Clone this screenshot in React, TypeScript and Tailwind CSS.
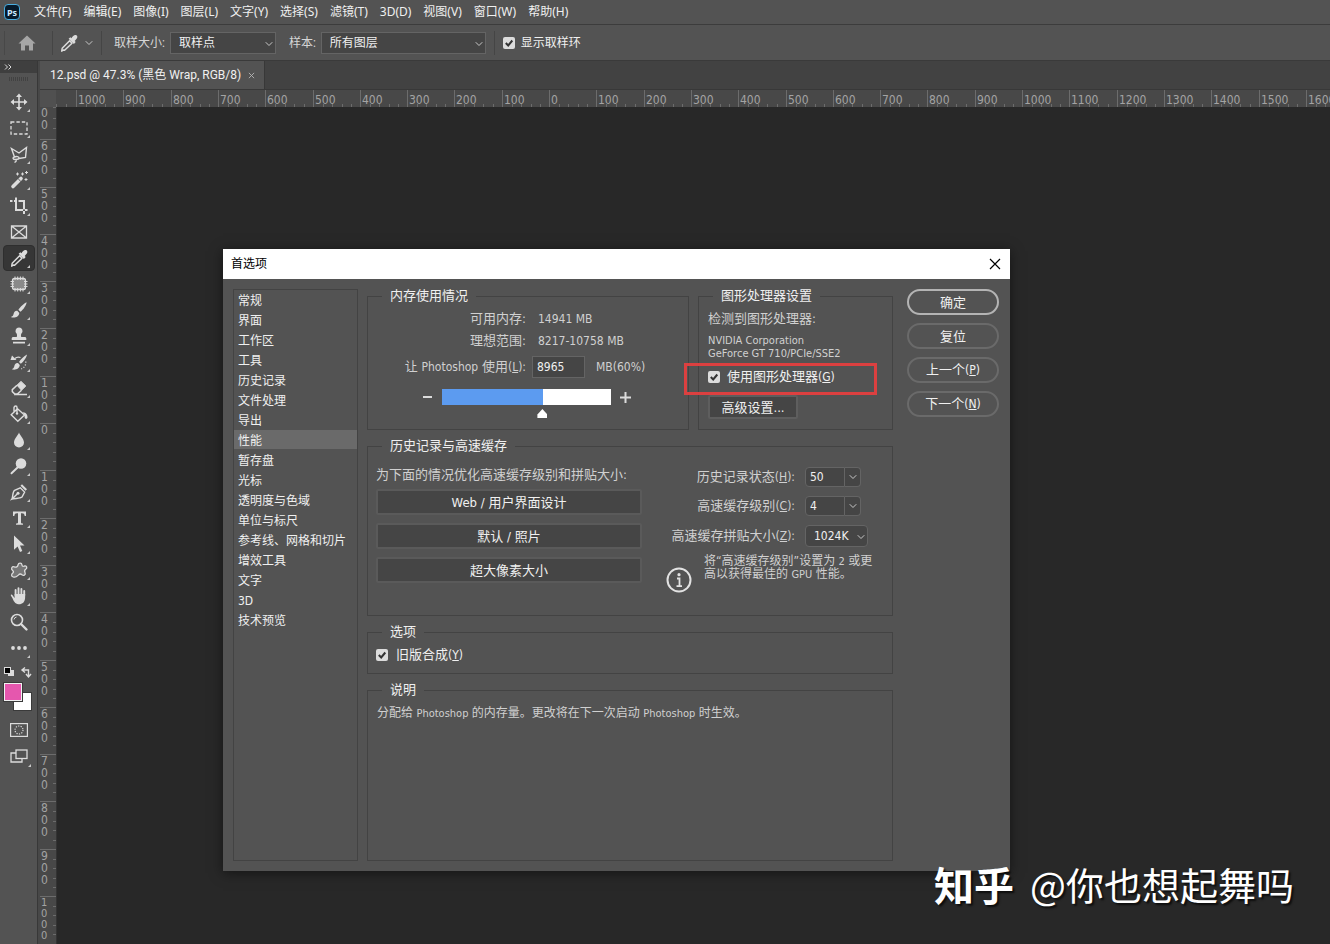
import React, { useState } from 'react';
import { ChevronDown } from 'lucide-react';

const UI_FONT = "font-[Roboto,'Noto_Sans_CJK_SC',sans-serif]";
const MENU_FONT = "font-['Noto_Sans','Noto_Sans_CJK_SC',sans-serif]";
const DIALOG_FONT = "font-['DejaVu_Sans_Condensed','Noto_Sans','Noto_Sans_CJK_SC',sans-serif]";

const menus = [
  '文件(F)', '编辑(E)', '图像(I)', '图层(L)', '文字(Y)', '选择(S)',
  '滤镜(T)', '3D(D)', '视图(V)', '窗口(W)', '帮助(H)',
];

const prefSections = [
  '常规', '界面', '工作区', '工具', '历史记录', '文件处理', '导出', '性能', '暂存盘',
  '光标', '透明度与色域', '单位与标尺', '参考线、网格和切片', '增效工具', '文字', '3D', '技术预览',
];

// Screen pixels for 100 document pixels at 47.3% zoom
const STEP = 47.3;
const cellSize = (i: number) => Math.round((i + 1) * STEP) - Math.round(i * STEP);

const EyedropperShape = () => (
  <>
    <path d="M4.5 17 2.7 18.2 3.2 15.3 10.6 7.8 13 10.2 5.6 17.3z" fill="none" strokeWidth="1.5" strokeLinejoin="round" />
    <path d="M9.6 5.8 11.4 4.2 12.4 5.2C13.6 3.4 15 1.8 16.8 2.1 18.7 2.6 18.7 4.6 17.6 5.8L15.7 7.9 16.7 9 14.9 10.9z" fill="currentColor" stroke="none" />
  </>
);

interface Tool {
  name: string;
  shape: React.ReactNode;
  single?: boolean;
}

const tools: Tool[] = [
  {
    name: '移动工具',
    shape: (
      <>
        <path d="M10 4v12M4 10h12" strokeWidth="1.6" />
        <path d="M10 1.5 13 5H7zM10 18.5 7 15h6zM1.5 10 5 7v6zM18.5 10 15 13V7z" fill="currentColor" stroke="none" />
      </>
    ),
  },
  { name: '矩形选框工具', shape: <rect x="2" y="4" width="16" height="12" fill="none" strokeWidth="1.3" strokeDasharray="3.4 2" /> },
  {
    name: '多边形套索工具',
    shape: (
      <path
        d="M5.5 13 2.5 4.5 10 9 17.5 3.5 16.5 13.5 10 14.5M5.5 13c-2 .5-2 2.5.5 2.5 2 0 4-.7 4-1.5 0-1.2-2.5-2-4.5-1zM7 15.3c.8 1.2.2 2.2-1.5 3.2"
        fill="none"
        strokeWidth="1.4"
      />
    ),
  },
  {
    name: '魔棒工具',
    shape: (
      <>
        <path d="M4 16.5 12 8.5" strokeWidth="3.6" strokeLinecap="round" />
        <path d="M13.5 5.5v-3M12 4h3M17.5 4v-3M16 2.5h3M17 11V8M15.5 9.5h3M8.5 5.5v-3M7 4h3" strokeWidth="1" />
        <path d="M9.2 8.8l2.6 2.6" stroke="#535353" strokeWidth="1" />
      </>
    ),
  },
  { name: '裁剪工具', shape: <path d="M1 5h2.5M5 5h1M7 1.5V14h7M9.5 5H15v8.5M15 15v3M16 14h2.5" fill="none" strokeWidth="2" /> },
  { name: '图框工具', single: true, shape: <path d="M2.5 4h15v12h-15zM2.5 4l15 12M17.5 4l-15 12" fill="none" strokeWidth="1.3" /> },
  { name: '吸管工具', shape: <EyedropperShape /> },
  {
    name: '修补工具',
    shape: (
      <>
        <rect x="3.5" y="4.5" width="13" height="11" rx="2" fill="#8a8a8a" strokeWidth="1.3" />
        <path d="M6 2.5V6M8.7 2.5V6M11.4 2.5V6M14 2.5V6M6 14v3.5M8.7 14v3.5M11.4 14v3.5M14 14v3.5M1.5 7.5H5M1.5 10H5M1.5 12.5H5M15 7.5h3.5M15 10h3.5M15 12.5h3.5" strokeWidth="1" />
      </>
    ),
  },
  {
    name: '画笔工具',
    shape: <path d="M17.6 2.2C15 3.5 11 7 9.4 9.8l2 2C14.3 9.7 17.4 5 17.6 2.2zM8.3 10.8C5.8 10.6 5 12.3 4.6 14 4.3 15.6 3.4 16.6 1.8 17 5.2 18.4 10 17 10.3 12.9z" fill="currentColor" stroke="none" />,
  },
  {
    name: '仿制图章工具',
    shape: <path d="M10 1.5a3.6 3.6 0 0 1 2.3 6.3C11.7 9 12 10.5 12.3 11h3.4c1 0 1.6.7 1.6 1.6V14H2.7v-1.4c0-.9.7-1.6 1.6-1.6h3.4c.3-.5.6-2 0-3.2A3.6 3.6 0 0 1 10 1.5zM4 15.7h12v1.8H4z" fill="currentColor" stroke="none" />,
  },
  {
    name: '历史记录画笔工具',
    shape: (
      <>
        <path d="M18 2.5C15 4 11.5 7.5 10 10l1.8 1.8C14.5 10 17.5 5.5 18 2.5zM9 11c-2.6-.1-3.3 1.5-3.7 3.2C5 15.7 4 16.8 2.7 17.2 6 18.5 10.5 17 10.8 13z" fill="currentColor" stroke="none" />
        <path d="M6 6.5C7.5 5 9.5 4.8 11.5 5.5" fill="none" strokeWidth="1.3" />
        <path d="M1.5 8 3 3.5 7.5 8z" fill="currentColor" stroke="none" />
        <path d="M16.8 9.5c.3 3-1.2 6-4.5 7.5" fill="none" strokeWidth="1.2" strokeDasharray="1.2 1.6" />
      </>
    ),
  },
  {
    name: '橡皮擦工具',
    shape: (
      <>
        <path d="M8 7.2 12 3.4 16.8 8 12.5 12.2z" fill="currentColor" strokeWidth="1" />
        <path d="M8 7.2 3.3 11.6v2L5.8 16h2.5l4.2-3.8M5 16.6h13" fill="none" strokeWidth="1.5" />
      </>
    ),
  },
  {
    name: '油漆桶工具',
    shape: (
      <>
        <path d="M8.5 4.8 15.5 11 8.8 17.3 2.2 10.8zM5 7.5V3.5C5.5 1.5 8 1.5 8 3.5v6" fill="none" strokeWidth="1.4" />
        <path d="M13.8 8.3c3-.2 5 2.8 4.7 5.3-.4 1.8-2.5 1.6-2.8 0-.2-2-.5-3.6-1.9-5.3z" fill="currentColor" stroke="none" />
        <circle cx="8" cy="9.6" r="1.2" fill="currentColor" stroke="none" />
      </>
    ),
  },
  { name: '模糊工具', shape: <path d="M10 2.5c1 3 5 6.4 5 10a5 5 0 0 1-10 0c0-3.6 4-7 5-10z" fill="currentColor" stroke="none" /> },
  {
    name: '减淡工具',
    shape: (
      <>
        <circle cx="12" cy="7.5" r="5.3" fill="currentColor" stroke="none" />
        <path d="M8.8 11.2 2.5 17.3" strokeWidth="1.9" strokeLinecap="round" />
      </>
    ),
  },
  {
    name: '钢笔工具',
    shape: (
      <>
        <path d="M2.8 17.2C4 15.5 3.3 10 5.6 8.3l5.7-2.5 4.3 4.3-2.6 5C11 17 5.5 16 2.8 17.2zM2.8 17.2 8.2 12" fill="none" strokeWidth="1.4" />
        <circle cx="9" cy="11.2" r="1.5" fill="currentColor" stroke="none" />
        <path d="M11.5 3.8 13 2.3 18 7.2 16.5 8.8z" fill="currentColor" stroke="none" />
      </>
    ),
  },
  {
    name: '横排文字工具',
    shape: <path d="M4 3.5h13V8h-1.3c-.3-2-1-2.7-2.7-2.7h-1v8.9c0 1 .5 1.3 2 1.3v1.2H7v-1.2c1.5 0 2-.3 2-1.3V5.3H8C6.3 5.3 5.6 6 5.3 8H4z" fill="currentColor" stroke="none" />,
  },
  { name: '路径选择工具', shape: <path d="M5 1.5 15.5 11.5H11L13.3 17l-2.3 1-2.4-5.5L5 15.8z" fill="currentColor" stroke="none" /> },
  {
    name: '自定形状工具',
    shape: <path d="M9 5c.5-2.3 3.7-2.5 4 0 .2 1.5 1 1.5 2.5 1 2.4-.6 3 2 1.2 3.3-1.5 1-1.5 1.7-.7 3.2 1 2.3-1.3 3.8-3 2.3-1.3-1.2-2.3-1.2-3.7.3-2 2-3.3 2.5-5 1.9-2.3-.8-2-2.8-.5-4 1-1 .8-1.6-.2-2.5C1.5 8.5 3 6.3 5.2 6.8 7.4 7.4 8.6 7 9 5z" fill="#777" strokeWidth="1.3" />,
  },
  {
    name: '抓手工具',
    shape: (
      <>
        <path d="M6.6 9.5V4M9.5 8V2.2M12.4 8.5V3M15.2 9.5V5" strokeWidth="1.9" strokeLinecap="round" />
        <path d="M2 8.5c-.8.9.6 2 1.5 3.7C4.5 14.7 6 18 9.5 18.2c4 .2 6.2-2.2 6.6-6L16.2 8H5.6v4C4.5 10.5 3 8 2 8.5z" fill="currentColor" stroke="none" />
      </>
    ),
  },
  {
    name: '缩放工具',
    single: true,
    shape: (
      <>
        <circle cx="8" cy="8" r="5.5" fill="none" strokeWidth="1.6" />
        <path d="M12 12l5.5 5.5" strokeWidth="2.4" strokeLinecap="round" />
        <path d="M5 7.5A3 3 0 0 1 7.5 5" fill="none" strokeWidth="1" />
      </>
    ),
  },
  {
    name: '编辑工具栏',
    shape: (
      <g fill="currentColor" stroke="none">
        <circle cx="4" cy="10" r="1.9" />
        <circle cx="10" cy="10" r="1.9" />
        <circle cx="16" cy="10" r="1.9" />
      </g>
    ),
  },
];

function ToolIcon({ children }: { children: React.ReactNode }) {
  return (
    <svg viewBox="0 0 20 20" className="w-5 h-5" stroke="currentColor" aria-hidden="true">
      {children}
    </svg>
  );
}

function Corner() {
  return (
    <svg viewBox="0 0 4 4" className="absolute right-1 bottom-[2px] w-[3px] h-[3px]" aria-hidden="true">
      <path d="M4 0v4H0z" fill="#c8c8c8" />
    </svg>
  );
}

function ToolPanel() {
  const [active, setActive] = useState('吸管工具');

  return (
    <aside className="w-[37px] shrink-0 bg-[#535353] text-[#dcdcdc] flex flex-col items-center">
      <div className="w-full h-3 bg-[#3f3f3f] flex items-center pl-1">
        <svg viewBox="0 0 8 6" className="w-2 h-[6px]" fill="none" stroke="#dcdcdc" aria-hidden="true">
          <path d="M1 .5 3.5 3 1 5.5M4.5.5 7 3 4.5 5.5" />
        </svg>
      </div>
      <div className="w-5 h-1 mt-1 mb-2 bg-[repeating-linear-gradient(90deg,#424242_0_1px,transparent_1px_2px)]" />

      {tools.map((tool) => (
        <button
          key={tool.name}
          aria-label={tool.name}
          onClick={() => setActive(tool.name)}
          className={`relative w-8 h-[26px] shrink-0 flex items-center justify-center rounded-sm border ${
            active === tool.name ? 'bg-[#363636] border-[#2e2e2e]' : 'border-transparent'
          }`}
        >
          <ToolIcon>{tool.shape}</ToolIcon>
          {!tool.single && <Corner />}
        </button>
      ))}

      <div className="w-full h-14 pl-[3px] pt-[5px]">
        <svg viewBox="0 0 32 46" className="w-8 h-[46px]" role="img" aria-label="前景色和背景色">
          <rect x="5" y="4" width="6" height="6" fill="#dcdcdc" />
          <rect x="1.5" y="1.5" width="6" height="6" fill="#000" stroke="#dcdcdc" />
          <path d="M20 4h5.5v6M22 1.5 19 4l3 2.5M23 8l2.5 3L28 8" fill="none" stroke="#dcdcdc" strokeWidth="1.4" />
          <rect x="10.5" y="26.5" width="18" height="18" fill="#fff" stroke="#3a3a3a" />
          <rect x=".5" y="16.5" width="19" height="19" fill="#3a3a3a" stroke="#3a3a3a" />
          <rect x="1.5" y="17.5" width="17" height="17" fill="#e557ae" stroke="#f0f0f0" />
        </svg>
      </div>
      <button aria-label="以快速蒙版模式编辑" className="h-[26px] flex items-center">
        <svg viewBox="0 0 18 14" className="w-[18px] h-[14px]" fill="none" stroke="#dcdcdc" aria-hidden="true">
          <rect x=".6" y=".6" width="16.8" height="12.8" strokeWidth="1.2" />
          <circle cx="9" cy="7" r="4" strokeWidth="1.2" strokeDasharray="1.2 1.3" />
        </svg>
      </button>
      <button aria-label="更改屏幕模式" className="relative w-8 h-[26px] flex items-center justify-center">
        <svg viewBox="0 0 18 14" className="w-[18px] h-[14px]" fill="none" stroke="#dcdcdc" strokeWidth="1.3" aria-hidden="true">
          <path d="M6 4H1v9h11v-3" />
          <rect x="6" y="1" width="11" height="8.5" />
        </svg>
        <Corner />
      </button>
    </aside>
  );
}

function MenuBar() {
  return (
    <nav className={`h-[25px] shrink-0 flex items-center pl-1 bg-[#535353] border-b border-[#3c3c3c] text-xs text-[#f0f0f0] whitespace-nowrap ${MENU_FONT}`}>
      <div className="w-4 h-4 mr-[14px] rounded-sm border border-[#4aaee0] bg-[#061a2b] flex items-center justify-center text-[9px] leading-none font-bold text-[#cdeaff]">
        Ps
      </div>
      <div className="flex gap-3">
        {menus.map((m) => (
          <button key={m}>{m}</button>
        ))}
      </div>
    </nav>
  );
}

interface BarSelectProps {
  id: string;
  label: string;
  value: string;
  width: string;
}

function BarSelect({ id, label, value, width }: BarSelectProps) {
  return (
    <>
      <label htmlFor={id} className="mr-[5px] text-[#d6d6d6]">{label}</label>
      <div className={`relative ${width}`}>
        <select id={id} className="appearance-none w-full h-[22px] pl-2 bg-[#454545] border border-[#646464] text-[#f0f0f0] text-xs">
          <option>{value}</option>
        </select>
        <ChevronDown className="absolute right-[1px] top-[6px] w-3 h-3 text-[#c8c8c8] pointer-events-none" />
      </div>
    </>
  );
}

function OptionsBar() {
  const [showRing, setShowRing] = useState(true);

  return (
    <div className="h-9 shrink-0 flex items-center bg-[#535353] border-b border-[#3a3a3a] text-xs whitespace-nowrap">
      <div className="w-px h-6 ml-1 bg-[#484848]" />
      <button aria-label="主页" className="ml-[13px] text-[#a6a6a6]">
        <svg viewBox="0 0 18 16" className="w-[18px] h-4" fill="currentColor" aria-hidden="true">
          <path d="M9 .5 17.5 8.5H15V15.5H11V10.5H7v5H3v-7H.5z" />
        </svg>
      </button>
      <div className="w-px h-6 ml-4 bg-[#454545]" />
      <button aria-label="吸管工具预设" className="ml-[6px] flex items-center gap-1 text-[#dcdcdc]">
        <ToolIcon><EyedropperShape /></ToolIcon>
        <ChevronDown className="w-3 h-3 text-[#c8c8c8]" />
      </button>
      <div className="w-px h-6 ml-[6px] mr-3 bg-[#454545]" />
      <BarSelect id="sample-size" label="取样大小:" value="取样点" width="w-[106px]" />
      <div className="w-[13px]" />
      <BarSelect id="sample-layers" label="样本:" value="所有图层" width="w-[165px]" />
      <div className="w-px h-6 mx-2 bg-[#454545]" />
      <label className="flex items-center gap-[6px] text-[#f0f0f0]">
        <CheckBox checked={showRing} onChange={setShowRing} />
        显示取样环
      </label>
    </div>
  );
}

function CheckBox({ checked, onChange }: { checked: boolean; onChange: (v: boolean) => void }) {
  return (
    <span className="relative w-3 h-3 shrink-0 block">
      <input
        type="checkbox"
        checked={checked}
        onChange={(e) => onChange(e.target.checked)}
        className="appearance-none block w-3 h-3 rounded-[2px] bg-[#dcdcdc]"
      />
      {checked && (
        <svg viewBox="0 0 12 12" className="absolute inset-0 w-3 h-3 pointer-events-none" fill="none" stroke="#333" strokeWidth="2" aria-hidden="true">
          <path d="M2.8 6 5.2 8.5 9.3 3.5" />
        </svg>
      )}
    </span>
  );
}

function HorizontalRuler() {
  const count = Math.ceil((window.innerWidth - 76) / STEP);
  const cells = Array.from({ length: count }, (_, i) => i - 10);

  return (
    <div className={`h-[17px] shrink-0 flex overflow-hidden bg-[#484848] text-xs leading-none text-[#a3a3a3] ${DIALOG_FONT}`}>
      <div className="w-4 shrink-0 bg-[#505050]" />
      <div className="w-5 shrink-0 grid grid-cols-2 items-end">
        <span className="h-[3px] border-l border-[#6c6c6c]" />
        <span className="h-[3px] border-l border-[#6c6c6c]" />
      </div>
      {cells.map((n) => (
        <div key={n} className="relative shrink-0 border-l border-[#6c6c6c] grid grid-cols-5 items-end" style={{ width: cellSize(n) }}>
          {[0, 1, 2, 3, 4].map((t) => (
            <span key={t} className={`h-[3px] ${t > 0 ? 'border-l border-[#6c6c6c]' : ''}`} />
          ))}
          <span className="absolute left-[1px] top-1">{Math.abs(n) * 100}</span>
        </div>
      ))}
    </div>
  );
}

function VerticalRuler() {
  const count = Math.floor((window.innerHeight - 139) / STEP);
  const cells = Array.from({ length: count }, (_, i) => i - 6);

  return (
    <div className={`w-[17px] shrink-0 flex flex-col overflow-hidden bg-[#484848] border-r border-[#333] text-xs text-[#a3a3a3] ${DIALOG_FONT}`}>
      <div className="h-8 shrink-0 flex justify-between">
        <div className="pl-[1px] leading-3">
          <div>0</div>
          <div>0</div>
        </div>
        <div className="w-[3px] grid grid-rows-3">
          {[0, 1, 2].map((t) => (
            <span key={t} className="border-t border-[#6c6c6c]" />
          ))}
        </div>
      </div>
      {cells.map((n) => {
        const label = String(Math.abs(n) * 100);
        return (
          <div key={n} className="shrink-0 flex justify-between border-t border-[#6c6c6c]" style={{ height: cellSize(n) }}>
            <div className={`pl-[1px] ${label.length > 3 ? 'text-[11px] leading-[11px]' : 'leading-3'}`}>
              {label.split('').map((d, i) => (
                <div key={i}>{d}</div>
              ))}
            </div>
            <div className="w-[3px] grid grid-rows-5">
              {[0, 1, 2, 3, 4].map((t) => (
                <span key={t} className={t > 0 ? 'border-t border-[#6c6c6c]' : ''} />
              ))}
            </div>
          </div>
        );
      })}
    </div>
  );
}

function Group({ title, className = '', children }: { title: string; className?: string; children: React.ReactNode }) {
  return (
    <fieldset className={`min-w-0 border border-[#434343] ${className}`}>
      <legend className="ml-[14px] px-2 text-[13px] leading-[14px] text-[#f0f0f0]">{title}</legend>
      {children}
    </fieldset>
  );
}

const fieldBox = 'bg-[#454545] border border-[#646464] text-[#f0f0f0] text-xs';

function MemoryGroup() {
  const [usage, setUsage] = useState(60);

  return (
    <Group title="内存使用情况" className="w-[322px] pb-2">
      <div className="pt-[5px] text-[13px] text-[#d0d0d0]">
        <div className="h-[22px] flex items-center">
          <span className="w-[158px] text-right">可用内存:</span>
          <span className="ml-3 text-xs">14941 MB</span>
        </div>
        <div className="h-[22px] flex items-center">
          <span className="w-[158px] text-right">理想范围:</span>
          <span className="ml-3 text-xs">8217-10758 MB</span>
        </div>
        <div className="h-[22px] mt-1 flex items-center">
          <label htmlFor="memory-use" className="w-[158px] text-right whitespace-nowrap">
            让 <span className="text-xs">Photoshop</span> 使用<span className="text-xs">(<u>L</u>):</span>
          </label>
          <input id="memory-use" defaultValue="8965" className={`ml-[6px] w-[53px] h-[22px] px-1 ${fieldBox}`} />
          <span className="ml-[11px] text-xs">MB(60%)</span>
        </div>
        <div className="mt-[11px] h-8 flex items-start justify-center pr-[2px] gap-[9px]">
          <button aria-label="减少" onClick={() => setUsage(usage - 1)} className="w-[10px] h-4 flex items-center">
            <span className="w-[9px] h-[2px] bg-[#dcdcdc]" />
          </button>
          <input
            type="range"
            aria-label="内存使用百分比"
            min={0}
            max={100}
            value={usage}
            onChange={(e) => setUsage(Number(e.target.value))}
            className="appearance-none block w-[169px] h-4 [&::-webkit-slider-runnable-track]:h-4 [&::-webkit-slider-thumb]:appearance-none [&::-webkit-slider-thumb]:w-[10px] [&::-webkit-slider-thumb]:h-[9px] [&::-webkit-slider-thumb]:mt-5 [&::-webkit-slider-thumb]:bg-white [&::-webkit-slider-thumb]:[clip-path:polygon(50%_0,100%_60%,100%_100%,0_100%,0_60%)]"
            style={{ background: `linear-gradient(90deg, #5c9bf0 ${usage}%, #fff ${usage}%)` }}
          />
          <button aria-label="增加" onClick={() => setUsage(usage + 1)} className="w-[11px] h-4 flex items-center text-[#dcdcdc]">
            <svg viewBox="0 0 11 11" className="w-[11px] h-[11px]" stroke="currentColor" strokeWidth="2" aria-hidden="true">
              <path d="M5.5 0v11M0 5.5h11" />
            </svg>
          </button>
        </div>
      </div>
    </Group>
  );
}

function GraphicsGroup() {
  const [useGpu, setUseGpu] = useState(true);

  return (
    <Group title="图形处理器设置" className="relative flex-1 pb-[10px]">
      <div className="pt-[5px] px-[9px] text-[13px] text-[#d0d0d0]">
        <div className="h-[22px] flex items-center">检测到图形处理器:</div>
        <p className="mt-1 text-[11px] leading-[13px] whitespace-nowrap">
          NVIDIA Corporation
          <br />
          GeForce GT 710/PCIe/SSE2
        </p>
        <label className="mt-[6px] h-[22px] flex items-center gap-[7px] text-[#f0f0f0]">
          <CheckBox checked={useGpu} onChange={setUseGpu} />
          <span>使用图形处理器<span className="text-xs">(<u>G</u>)</span></span>
        </label>
        <button className="mt-[7px] w-[90px] h-6 rounded-[2px] border-2 border-[#5e5e5e] bg-[#454545] text-[#f0f0f0] leading-none">
          高级设置...
        </button>
      </div>
      {/* highlight around the GPU switch */}
      <div className="absolute -left-[15px] top-[60px] w-[193px] h-8 border-3 border-[#dc4040] pointer-events-none" />
    </Group>
  );
}

function ComboField({ id, value }: { id: string; value: string }) {
  return (
    <div className="flex w-14 h-5">
      <input id={id} defaultValue={value} className={`w-10 h-5 pl-1 rounded-l-sm ${fieldBox}`} />
      <button aria-label="展开" className={`w-4 h-5 flex items-center justify-center border-l-0 rounded-r-sm ${fieldBox}`}>
        <ChevronDown className="w-3 h-3 shrink-0 text-[#c8c8c8]" />
      </button>
    </div>
  );
}

function HistoryGroup() {
  const presets = ['Web / 用户界面设计', '默认 / 照片', '超大像素大小'];

  return (
    <Group title="历史记录与高速缓存" className="pb-[22px]">
      <div className="flex pl-2 text-[13px] text-[#d0d0d0]">
        <div className="w-[266px] pt-3">
          <p className="h-5 flex items-center whitespace-nowrap">为下面的情况优化高速缓存级别和拼贴大小:</p>
          <div className="mt-1 flex flex-col gap-2">
            {presets.map((p) => (
              <button key={p} className="w-full h-[26px] rounded-[2px] border-2 border-[#5a5a5a] bg-[#454545] text-[#f0f0f0] leading-none">
                {p}
              </button>
            ))}
          </div>
        </div>

        <div className="w-[250px] pt-[14px]">
          <div className="grid grid-cols-[153px_1fr] gap-x-[10px] gap-y-[9px] items-center">
            <label htmlFor="history-states" className="text-right whitespace-nowrap">历史记录状态<span className="text-xs">(<u>H</u>):</span></label>
            <ComboField id="history-states" value="50" />
            <label htmlFor="cache-levels" className="text-right whitespace-nowrap">高速缓存级别<span className="text-xs">(<u>C</u>):</span></label>
            <ComboField id="cache-levels" value="4" />
            <label htmlFor="tile-size" className="text-right whitespace-nowrap">高速缓存拼贴大小<span className="text-xs">(<u>Z</u>):</span></label>
            <div className="relative w-[63px]">
              <select id="tile-size" className={`appearance-none block w-full h-[22px] pl-2 rounded-sm ${fieldBox}`}>
                <option>1024K</option>
              </select>
              <ChevronDown className="absolute right-[1px] top-[6px] w-3 h-3 text-[#c8c8c8] pointer-events-none" />
            </div>
          </div>
          <div className="mt-1 pl-6 flex gap-3">
            <svg viewBox="0 0 26 26" className="w-[26px] h-[26px] mt-4 shrink-0" fill="none" stroke="#e2e2e2" aria-hidden="true">
              <circle cx="13" cy="13" r="11.5" strokeWidth="2" />
              <circle cx="13" cy="7.7" r="1.6" fill="#e2e2e2" stroke="none" />
              <path d="M11 11.5h2.5V19M10.5 19.2h5.5" strokeWidth="1.8" />
            </svg>
            <p className="mt-1 text-xs leading-[13px] whitespace-nowrap">
              将“高速缓存级别”设置为 <span className="text-[11px]">2</span> 或更
              <br />
              高以获得最佳的 <span className="text-[11px]">GPU</span> 性能。
            </p>
          </div>
        </div>
      </div>
    </Group>
  );
}

function PreferencesDialog() {
  const [section, setSection] = useState('性能');
  const [legacy, setLegacy] = useState(true);

  return (
    <section role="dialog" aria-label="首选项" className={`absolute left-[223px] top-[249px] w-[787px] bg-[#535353] shadow-[0_2px_12px_rgba(0,0,0,0.5)] ${DIALOG_FONT}`}>
      <header className="h-[30px] px-2 flex items-center justify-between bg-white text-xs text-black">
        <h1>首选项</h1>
        <button aria-label="关闭" className="mr-[1px]">
          <svg viewBox="0 0 12 12" className="w-3 h-3" stroke="#000" strokeWidth="1.2" aria-hidden="true">
            <path d="M1 1l10 10M11 1 1 11" />
          </svg>
        </button>
      </header>

      <div className="flex p-[10px]">
        <ul className="w-[125px] shrink-0 border border-[#434343] text-xs text-[#f0f0f0]">
          {prefSections.map((s) => (
            <li key={s} className="h-5">
              <button
                onClick={() => setSection(s)}
                className={`block w-full h-[19px] pl-1 pt-[1px] text-left leading-5 whitespace-nowrap ${section === s ? 'bg-[#6a6a6a]' : ''}`}
              >
                {s}
              </button>
            </li>
          ))}
        </ul>

        <div className="ml-[9px] flex-1 flex flex-col gap-[9px]">
          <div className="flex gap-[9px]">
            <MemoryGroup />
            <GraphicsGroup />
          </div>
          <HistoryGroup />
          <Group title="选项" className="pb-2">
            <label className="mt-[6px] ml-2 h-5 flex items-center gap-2 text-[13px] text-[#f0f0f0]">
              <CheckBox checked={legacy} onChange={setLegacy} />
              <span>旧版合成<span className="text-xs">(<u>Y</u>)</span></span>
            </label>
          </Group>
          <Group title="说明" className="min-h-[178px]">
            <p className="mt-[6px] px-[9px] text-xs leading-5 text-[#d0d0d0]">
              分配给 <span className="text-[11px]">Photoshop</span> 的内存量。更改将在下一次启动 <span className="text-[11px]">Photoshop</span> 时生效。
            </p>
          </Group>
        </div>

        <div className="ml-[14px] mr-[1px] w-[92px] flex flex-col gap-2 text-[13px] text-[#f0f0f0]">
          <button className="h-[26px] rounded-full border-2 border-[#b4b4b4] leading-none">确定</button>
          <button className="h-[26px] rounded-full border-2 border-[#6a6a6a] leading-none">复位</button>
          <button className="h-[26px] rounded-full border-2 border-[#6a6a6a] leading-none">上一个<span className="text-xs">(<u>P</u>)</span></button>
          <button className="h-[26px] rounded-full border-2 border-[#6a6a6a] leading-none">下一个<span className="text-xs">(<u>N</u>)</span></button>
        </div>
      </div>
    </section>
  );
}

export default function App() {
  return (
    <div className={`relative h-screen flex flex-col overflow-hidden bg-[#282828] ${UI_FONT}`}>
      <MenuBar />
      <OptionsBar />

      <div className="flex-1 min-h-0 flex">
        <ToolPanel />
        <div className="w-[3px] shrink-0 bg-[#484848] border-l border-[#383838]" />

        <main className="flex-1 min-w-0 flex flex-col">
          <div className="h-[29px] shrink-0 flex bg-[#424242] border-b border-[#383838] text-xs text-[#f0f0f0]">
            <div className="w-[225px] pl-[10px] flex items-center gap-[7px] bg-[#535353] border-r border-[#383838] whitespace-nowrap">
              12.psd @ 47.3% (黑色 Wrap, RGB/8)
              <button aria-label="关闭文档">
                <svg viewBox="0 0 8 8" className="w-[7px] h-[7px]" stroke="#b8b8b8" aria-hidden="true">
                  <path d="M1 1l6 6M7 1 1 7" />
                </svg>
              </button>
            </div>
          </div>
          <HorizontalRuler />
          <div className="flex-1 min-h-0 flex">
            <VerticalRuler />
            <div className="flex-1 bg-[#282828]" />
          </div>
        </main>
      </div>

      <PreferencesDialog />

      <div className="absolute right-9 bottom-[33px] flex items-center gap-4 text-white whitespace-nowrap pointer-events-none [text-shadow:2px_2px_2px_rgba(0,0,0,0.7)] font-['Noto_Sans_CJK_SC',sans-serif]">
        <span className="text-[40px] leading-[54px] font-bold">知乎</span>
        <span className="text-[38px] leading-[54px]">@你也想起舞吗</span>
      </div>
    </div>
  );
}
